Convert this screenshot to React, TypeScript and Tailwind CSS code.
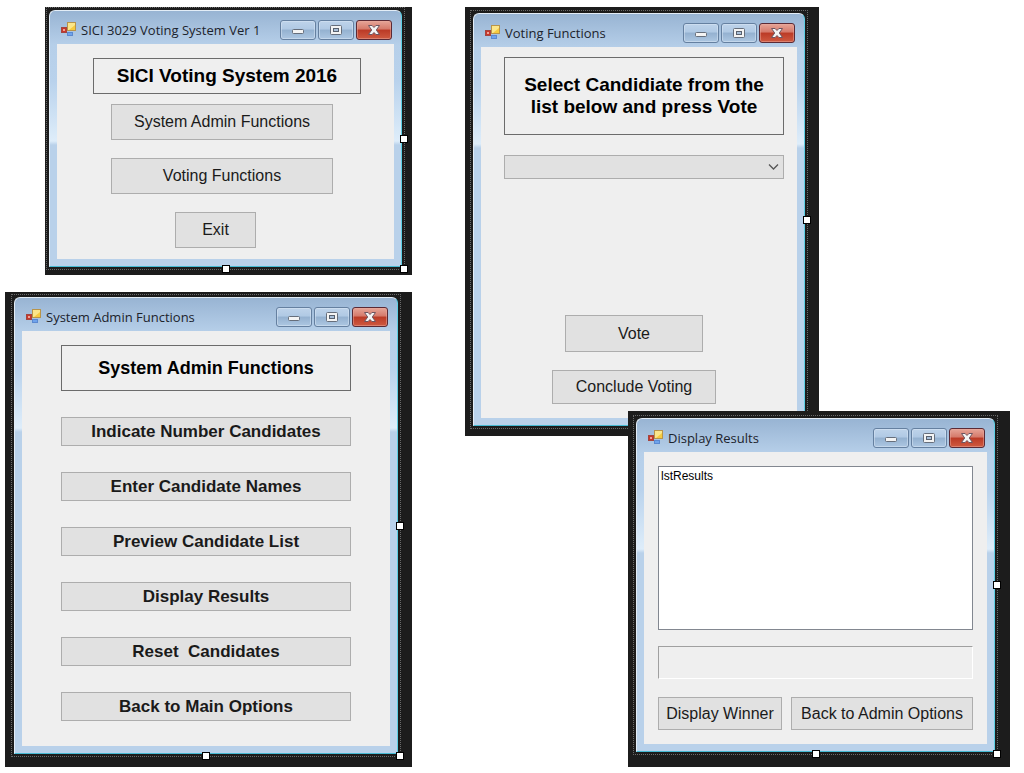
import type { ReactNode } from "react";
import clsx from "clsx";

type DesignerWindowProps = {
  title: string;
  className: string;
  children: ReactNode;
};

const adminActions = [
  "Indicate Number Candidates",
  "Enter Candidate Names",
  "Preview Candidate List",
  "Display Results",
  "Reset  Candidates",
  "Back to Main Options",
];

function FormIcon() {
  return (
    <svg width="15" height="15" viewBox="0 0 15 15" aria-hidden="true">
      <rect x="0.5" y="5.5" width="5" height="5" fill="#c8372b" stroke="#a4453f" />
      <rect x="2" y="7" width="2" height="2" fill="#eda397" />
      <rect x="6.5" y="0.5" width="8" height="8" fill="#f6cb3f" stroke="#b8944a" />
      <path d="M7 1h7v2L8 8H7z" fill="#fbe68a" />
      <rect x="6.5" y="10.5" width="5" height="3" fill="#6fa3ec" stroke="#5b89d0" />
    </svg>
  );
}

function MinimizeIcon() {
  return (
    <svg width="14" height="12" viewBox="0 0 14 12" aria-hidden="true">
      <rect x="1.5" y="5.5" width="11" height="4" rx="1" fill="#f4f4f4" stroke="#666e7b" />
    </svg>
  );
}

function MaximizeIcon() {
  return (
    <svg width="14" height="12" viewBox="0 0 14 12" aria-hidden="true">
      <rect x="1.5" y="1.5" width="11" height="9" rx="1" fill="#f4f4f4" stroke="#666e7b" />
      <rect x="4.5" y="4.5" width="5" height="3" fill="#a9c0da" stroke="#59616e" />
    </svg>
  );
}

function CloseIcon() {
  return (
    <svg width="14" height="12" viewBox="0 0 14 12" aria-hidden="true">
      <path
        d="M1.5 1.5h3.6L7 3.5l1.9-2h3.6L9.3 6l3.2 4.5H8.9L7 8.5l-1.9 2H1.5L4.7 6z"
        fill="#f4f4f4"
        stroke="#6e5560"
        strokeLinejoin="round"
      />
    </svg>
  );
}

function CaptionButton({
  label,
  danger,
  children,
}: {
  label: string;
  danger?: boolean;
  children: ReactNode;
}) {
  return (
    <button
      aria-label={label}
      className={clsx(
        "flex h-5 w-9 items-center justify-center rounded-[3px] border",
        danger
          ? "border-[#5b2a35] bg-[linear-gradient(#e6a598_0%,#d5796a_45%,#bb3a26_50%,#cf5a41_100%)] shadow-[inset_0_0_0_1px_#e9a99d80]"
          : "border-[#6580a0] bg-[linear-gradient(#bed3ea_0%,#b0c9e4_45%,#94b1d0_50%,#adc7e2_100%)] shadow-[inset_0_0_0_1px_#dbe8f580]"
      )}
    >
      {children}
    </button>
  );
}

function Handle({ className }: { className: string }) {
  return <span className={clsx("absolute size-2 border border-black bg-white", className)} />;
}

function DesignerWindow({ title, className, children }: DesignerWindowProps) {
  return (
    <section className={clsx("absolute flex bg-[#1c1c1c]", className)}>
      <div className="relative flex flex-1 border border-dotted border-[#6a6a6a] p-0.5">
        <div className="flex flex-1 flex-col rounded-t-md border border-t-[#e3edf7] border-r-[#5ccfe4] border-b-[#45b9d2] border-l-[#e3edf7] bg-[linear-gradient(#98b4d3_0,#b6cfe9_34px,#b9d2ec_70px,#deedfa_130px,#b9d1ea_134px)] px-[7px] pb-[7px]">
          <header className="flex h-[33px] items-center pt-1">
            <div className="ml-1">
              <FormIcon />
            </div>
            <h2 className="ml-[5px] flex-1 font-['Open_Sans'] text-[13px] leading-4 whitespace-nowrap text-[#1c232c]">
              {title}
            </h2>
            <div className="mr-0.5 flex gap-0.5">
              <CaptionButton label="Minimize">
                <MinimizeIcon />
              </CaptionButton>
              <CaptionButton label="Maximize">
                <MaximizeIcon />
              </CaptionButton>
              <CaptionButton label="Close" danger>
                <CloseIcon />
              </CaptionButton>
            </div>
          </header>
          <div className="flex flex-1 flex-col bg-[#efefef]">{children}</div>
        </div>
        <Handle className="top-1/2 -right-1 -mt-1" />
        <Handle className="-bottom-1 left-1/2 -ml-1" />
        <Handle className="-right-1 -bottom-1" />
      </div>
    </section>
  );
}

function FormButton({ className, children }: { className: string; children: ReactNode }) {
  return (
    <button
      className={clsx(
        "border border-[#adadad] bg-[#e1e1e1] whitespace-pre text-[#1a1a1a]",
        className
      )}
    >
      {children}
    </button>
  );
}

function Heading({ className, children }: { className: string; children: ReactNode }) {
  return (
    <h1
      className={clsx(
        "flex items-center justify-center border border-[#6b6b6b] text-center leading-[22px] font-bold",
        className
      )}
    >
      {children}
    </h1>
  );
}

export default function App() {
  return (
    <main className="relative min-h-screen w-full overflow-hidden bg-white font-['Liberation_Sans',sans-serif] text-base leading-5 text-black">
      <DesignerWindow
        title="SICI 3029 Voting System Ver 1"
        className="top-[7px] left-[45px] h-[268px] w-[367px] pr-[7px] pb-[5px] pl-px"
      >
        <div className="flex flex-col items-start pt-3.5 pl-9">
          <Heading className="h-9 w-[268px] text-[19px]">SICI Voting System 2016</Heading>
          <FormButton className="mt-2.5 ml-[18px] h-9 w-[222px]">System Admin Functions</FormButton>
          <FormButton className="mt-[18px] ml-[18px] h-9 w-[222px]">Voting Functions</FormButton>
          <FormButton className="mt-[18px] ml-[82px] h-9 w-[81px]">Exit</FormButton>
        </div>
      </DesignerWindow>

      <DesignerWindow
        title="System Admin Functions"
        className="top-[292px] left-[5px] h-[475px] w-[407px] pt-0.5 pr-[11px] pb-2.5 pl-1.5"
      >
        <div className="flex flex-col px-[39px] pt-3.5">
          <Heading className="h-[46px] text-[18px]">System Admin Functions</Heading>
          <div className="mt-[26px] flex flex-col gap-[26px]">
            {adminActions.map((action) => (
              <FormButton key={action} className="h-[29px] text-[17px] font-bold">
                {action}
              </FormButton>
            ))}
          </div>
        </div>
      </DesignerWindow>

      <DesignerWindow
        title="Voting Functions"
        className="top-[7px] left-[465px] h-[429px] w-[354px] pt-[3px] pr-[11px] pb-[7px] pl-[5px]"
      >
        <div className="flex flex-1 flex-col items-start pt-2.5 pb-3.5 pl-[23px]">
          <Heading className="h-[78px] w-[280px] px-4 text-[19px]">
            Select Candidiate from the list below and press Vote
          </Heading>
          <div className="relative mt-5 w-[280px]">
            <select
              aria-label="Candidate"
              className="block h-6 w-full appearance-none border border-[#adadad] bg-[#e1e1e1]"
            />
            <svg
              className="pointer-events-none absolute top-2 right-[5px]"
              width="11"
              height="8"
              viewBox="0 0 11 8"
              fill="none"
              aria-hidden="true"
            >
              <path d="M1 1.5l4.5 4.5L10 1.5" stroke="#555" strokeWidth="1.3" />
            </svg>
          </div>
          <div className="mt-auto ml-12 flex flex-col items-center gap-[18px]">
            <FormButton className="h-[37px] w-[138px]">Vote</FormButton>
            <FormButton className="h-[34px] w-[164px]">Conclude Voting</FormButton>
          </div>
        </div>
      </DesignerWindow>

      <DesignerWindow
        title="Display Results"
        className="top-[411px] left-[628px] h-[356px] w-[382px] pt-1 pr-3 pb-3 pl-[5px]"
      >
        <div className="flex flex-col px-3.5 pt-3.5">
          <select
            size={10}
            aria-label="Results"
            className="h-[164px] appearance-none border border-[#828790] bg-white px-0.5 text-[12px]"
          >
            <option className="px-0 py-0.5">lstResults</option>
          </select>
          <output
            aria-label="Winner"
            className="mt-4 h-[33px] border border-t-[#a0a0a0] border-r-white border-b-white border-l-[#a0a0a0]"
          />
          <div className="mt-[18px] flex gap-[9px]">
            <FormButton className="h-[33px] w-[124px]">Display Winner</FormButton>
            <FormButton className="h-[33px] flex-1">Back to Admin Options</FormButton>
          </div>
        </div>
      </DesignerWindow>
    </main>
  );
}
